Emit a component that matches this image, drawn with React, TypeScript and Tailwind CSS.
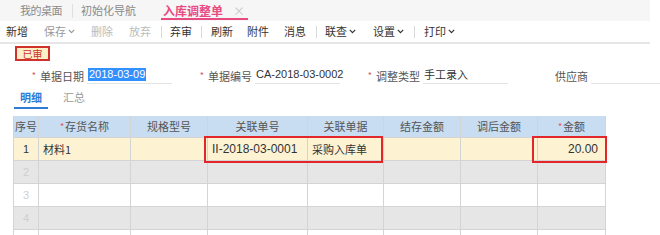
import React from "react";

const font = { fontFamily: '"Noto Sans CJK SC", "Liberation Sans", sans-serif' };

function Caret() {
  return (
    <svg width="7" height="5" viewBox="0 0 7 5" className="ml-[2px] inline-block">
      <path d="M0.8 0.8 L3.5 3.6 L6.2 0.8" fill="none" stroke="currentColor" strokeWidth="1.2" />
    </svg>
  );
}

function Sep({ l, r }: { l: string; r: string }) {
  return <span className={`h-[12px] w-px bg-[#d9d9d9] ${l} ${r}`} />;
}

export default function App() {
  const cols = ["序号", "存货名称", "规格型号", "关联单号", "关联单据", "结存金额", "调后金额", "金额"];
  const req = [false, true, false, false, false, false, false, true];
  const rows = [
    { bg: "bg-[#fdf3d3]", n: "1", dark: true, cells: ["材料1", "", "II-2018-03-0001", "采购入库单", "", "", "20.00"] },
    { bg: "bg-[#e6e6e6]", n: "2", dark: false, cells: ["", "", "", "", "", "", ""] },
    { bg: "bg-white", n: "3", dark: false, cells: ["", "", "", "", "", "", ""] },
    { bg: "bg-[#e6e6e6]", n: "4", dark: false, cells: ["", "", "", "", "", "", ""] },
    { bg: "bg-white", n: "", dark: false, cells: ["", "", "", "", "", "", ""] },
  ];
  return (
    <div className="w-[660px] h-[235px] overflow-hidden bg-white text-[11px] text-[#333]" style={font}>
      {/* tab bar */}
      <div className="w-[650px] h-[21px] bg-[#f6f6f6] flex items-center text-[#8a8a8a]">
        <span className="ml-[20px] w-[42px] tracking-[-0.5px]">我的桌面</span>
        <span className="ml-[10px] h-[14px] w-px bg-[#e0e0e0]" />
        <span className="ml-[8px]">初始化导航</span>
        <div className="ml-[25px] h-full relative flex items-center pl-[2px] w-[87px]">
          <span className="text-[#e84a82] text-[12px] font-bold">入库调整单</span>
          <span className="ml-[10px] text-[#c8c8c8] text-[12px]">×</span>
          <span className="absolute left-0 right-0 bottom-[1px] h-[2px] bg-[#e84a82]" />
        </div>
      </div>
      {/* toolbar */}
      <div className="w-[650px] h-[23px] flex items-center border-b-2 border-[#e6e6e6] pl-[6px]">
        <span className="text-[#333]">新增</span>
        <span className="ml-[16px] text-[#999] flex items-center">保存<Caret /></span>
        <span className="ml-[16px] text-[#bbb]">删除</span>
        <span className="ml-[16px] text-[#bbb]">放弃</span>
        <Sep l="ml-[10px]" r="mr-[8px]" />
        <span>弃审</span>
        <Sep l="ml-[9px]" r="mr-[9px]" />
        <span>刷新</span>
        <span className="ml-[14px]">附件</span>
        <span className="ml-[15px]">消息</span>
        <Sep l="ml-[10px]" r="mr-[8px]" />
        <span className="flex items-center">联查<Caret /></span>
        <span className="ml-[17px] flex items-center">设置<Caret /></span>
        <Sep l="ml-[10px]" r="mr-[9px]" />
        <span className="flex items-center">打印<Caret /></span>
      </div>
      {/* status */}
      <div className="pl-[15px] pt-[2px]">
        <div className="w-[35px] h-[15px] border-2 border-[#d0312d] bg-[#fdf0c6] text-[#d0312d] text-[10px] leading-[11px] flex items-center justify-center">
          已审
        </div>
      </div>
      {/* fields */}
      <div className="flex pl-[4px] mt-[5px] h-[18px] items-end">
        {[
          { l: "单据日期", v: "2018-03-09", sel: true, r: true },
          { l: "单据编号", v: "CA-2018-03-0002", sel: false, r: true },
          { l: "调整类型", v: "手工录入", sel: false, r: true },
          { l: "供应商", v: "", sel: false, r: false },
        ].map((f, i) => (
          <div key={i} className="w-[168px] flex items-end">
            <div className="w-[83px] pr-[3px] text-right text-[#555] leading-[16px]">
              {f.r && <span className="text-[#e05555] text-[9px] mr-[4px] align-top">*</span>}
              {f.l}
            </div>
            <div className="w-[85px] border-b border-[#e3e3e3] h-[19px] flex items-center pl-[1px] whitespace-nowrap">
              {f.sel ? (
                <span className="bg-[#3390ff] text-white leading-[13px] px-[1px]" style={{ fontFamily: '"Liberation Sans", sans-serif' }}>{f.v}</span>
              ) : (
                <span style={/^[A-Z]/.test(f.v) ? { fontFamily: '"Liberation Sans", sans-serif', fontSize: "11px" } : undefined}>{f.v}</span>
              )}
            </div>
          </div>
        ))}
      </div>
      {/* sub tabs */}
      <div className="flex h-[23px] ml-[14px] mt-[2px] items-center">
        <div className="w-[34px] h-full relative flex items-center justify-center text-[#2e7bd6] font-bold">
          明细
          <span className="absolute left-0 right-0 bottom-0 h-[2px] bg-[#2e7bd6]" />
        </div>
        <span className="ml-[15px] text-[#999]">汇总</span>
      </div>
      {/* table */}
      <div className="relative ml-[13px] mt-[7px] w-[592px]">
        <div className="grid grid-cols-[25px_92px_77px_100px_76px_77px_77px_68px] border-l border-[#d4d4d4]">
          {cols.map((c, i) => (
            <div key={c} className="h-[22px] bg-[#c9ddf2] border-r border-b border-[#d4d4d4] flex items-center justify-center text-[#555]">
              {req[i] && <span className="text-[#e05555] text-[9px] self-start mt-[4px] mr-[1px]">*</span>}
              {c}
            </div>
          ))}
          {rows.map((r, ri) => (
            <React.Fragment key={ri}>
              <div className={`h-[23px] ${r.bg} border-r border-b border-[#d4d4d4] flex items-center justify-center ${r.dark ? "text-[#333]" : "text-[#cfcfcf]"}`} style={{ fontFamily: '"Liberation Sans", sans-serif' }}>
                {r.n}
              </div>
              {r.cells.map((c, ci) => (
                <div
                  key={ci}
                  className={`h-[23px] ${r.bg} border-r border-b border-[#d4d4d4] flex items-center ${ci === 6 ? "justify-end pr-[7px]" : "pl-[4px]"}`}
                  style={/^[0-9A-Z]/.test(c) ? { fontFamily: '"Liberation Sans", sans-serif', fontSize: "12px" } : undefined}
                >
                  {c}
                </div>
              ))}
            </React.Fragment>
          ))}
        </div>
        <div className="absolute left-[191px] top-[20px] w-[179px] h-[27px] border-2 border-[#e2262a]" />
        <div className="absolute left-[519px] top-[20px] w-[75px] h-[27px] border-2 border-[#e2262a]" />
      </div>
    </div>
  );
}
